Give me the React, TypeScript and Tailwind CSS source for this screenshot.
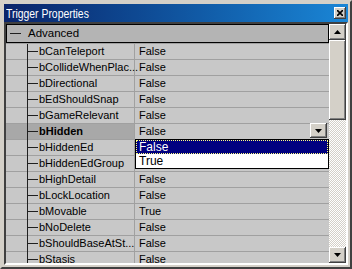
import React from 'react';

interface Prop {
  name: string;
  value: string;
  selected?: boolean;
}

const props: Prop[] = [
  { name: 'bCanTeleport', value: 'False' },
  { name: 'bCollideWhenPlac...', value: 'False' },
  { name: 'bDirectional', value: 'False' },
  { name: 'bEdShouldSnap', value: 'False' },
  { name: 'bGameRelevant', value: 'False' },
  { name: 'bHidden', value: 'False', selected: true },
  { name: 'bHiddenEd', value: 'False' },
  { name: 'bHiddenEdGroup', value: 'False' },
  { name: 'bHighDetail', value: 'False' },
  { name: 'bLockLocation', value: 'False' },
  { name: 'bMovable', value: 'True' },
  { name: 'bNoDelete', value: 'False' },
  { name: 'bShouldBaseAtSt...', value: 'False' },
  { name: 'bStasis', value: 'False' },
];

const raised =
  'bg-[#d4d0c8] shadow-[inset_-1px_-1px_#404040,inset_1px_1px_#ffffff,inset_-2px_-2px_#808080,inset_2px_2px_#d4d0c8]';

function Arrow({ up }: { up?: boolean }) {
  return (
    <svg width="7" height="4" viewBox="0 0 7 4">
      {up ? <polygon points="3.5,0 7,4 0,4" fill="#000" /> : <polygon points="0,0 7,0 3.5,4" fill="#000" />}
    </svg>
  );
}

function PropRow({ p }: { p: Prop }) {
  return (
    <div className="relative flex h-[16px] shrink-0 border-b border-[#a0a0a0]">
      <div
        className={`relative flex w-[129px] shrink-0 items-center border-r border-[#a0a0a0] pl-[33px] ${
          p.selected ? 'bg-[#a8a8a8] font-bold' : ''
        }`}
      >
        <div className="absolute left-[21px] top-0 bottom-[-1px] w-px bg-[#202020]" />
        <div className="absolute left-[21px] top-[7px] h-px w-[11px] bg-[#202020]" />
        <span className="whitespace-nowrap leading-none">{p.name}</span>
      </div>
      <div className="relative flex flex-1 items-center pl-[4px]">
        <span className="leading-none">{p.value}</span>
        {p.selected && (
          <div className={`absolute right-[2px] top-[-1px] flex h-[15px] w-[17px] items-center justify-center ${raised}`}>
            <Arrow />
          </div>
        )}
      </div>
    </div>
  );
}

export default function App() {
  return (
    <div
      className="flex h-[269px] w-[352px] flex-col border-2 border-t-[#d4d0c8] border-l-[#d4d0c8] border-r-[#404040] border-b-[#404040] bg-[#d4d0c8] p-[2px] text-[11px] text-black"
      style={{ fontFamily: '"Liberation Sans", Arial, sans-serif' }}
    >
      <div className="flex h-[18px] shrink-0 items-center justify-between bg-gradient-to-r from-[#0a246a] to-[#1a86d6] pl-[2px] pr-[2px]">
        <span className="origin-left scale-x-[0.8] whitespace-nowrap text-[13px] leading-none text-white">
          Trigger Properties
        </span>
        <div className={`flex h-[12px] w-[12px] items-center justify-center ${raised}`}>
          <svg width="6" height="6" viewBox="0 0 6 6">
            <path d="M0 0 L6 6 M6 0 L0 6" stroke="#000" strokeWidth="1.6" />
          </svg>
        </div>
      </div>

      <div className="flex min-h-0 flex-1 border-2 border-t-[#404040] border-l-[#404040] border-r-white border-b-white">
        <div className="relative flex min-w-0 flex-1 flex-col overflow-hidden bg-[#c8c8c8]">
          <div className="h-[20px] shrink-0 border-b border-[#a0a0a0]">
            <div className="flex h-[19px] items-center border border-black bg-[#b4b4b4]">
              <div className="ml-[3px] h-px w-[11px] bg-[#202020]" />
              <span className="ml-[7px] text-[11.5px] leading-none">Advanced</span>
            </div>
          </div>
          {props.map(p => (
            <PropRow key={p.name} p={p} />
          ))}

          <div className="absolute left-[129px] top-[115px] flex h-[30px] w-[194px] flex-col border border-black bg-white">
            <div className="flex h-[14px] items-center border border-dotted border-[#ffff80] bg-[#000080] pl-[2px] text-white">
              <span className="text-[12px] leading-none">False</span>
            </div>
            <div className="flex h-[14px] items-center pl-[3px]">
              <span className="text-[12px] leading-none">True</span>
            </div>
          </div>
        </div>

        <div className="flex w-[17px] shrink-0 flex-col">
          <div className={`flex h-[16px] shrink-0 items-center justify-center ${raised}`}>
            <Arrow up />
          </div>
          <div className={`h-[80px] shrink-0 ${raised}`} />
          <div className="flex-1 bg-[repeating-conic-gradient(#ffffff_0%_25%,#d4d0c8_0%_50%)] bg-[length:2px_2px]" />
          <div className={`flex h-[16px] shrink-0 items-center justify-center ${raised}`}>
            <Arrow />
          </div>
        </div>
      </div>
    </div>
  );
}
